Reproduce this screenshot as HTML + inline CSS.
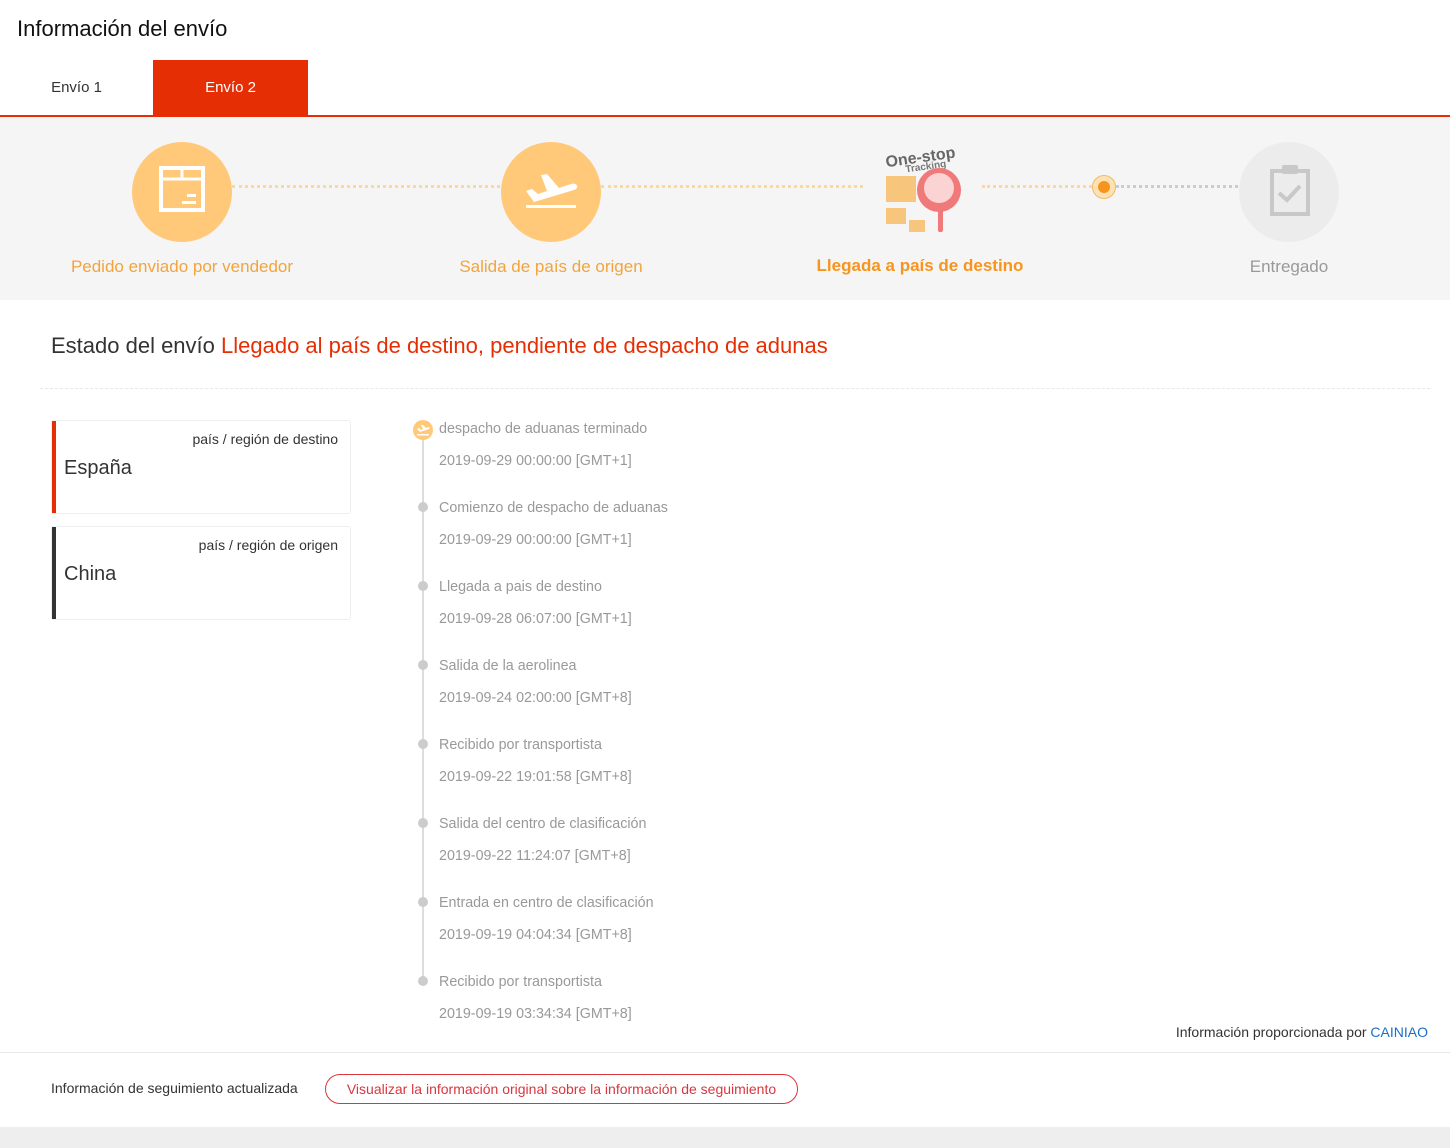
<!DOCTYPE html>
<html><head><meta charset="utf-8"><style>
*{margin:0;padding:0;box-sizing:border-box}
body{width:1450px;height:1148px;background:#fff;font-family:"Liberation Sans",sans-serif;position:relative;overflow:hidden;color:#333}
.a{position:absolute;white-space:nowrap}
.circ{position:absolute;width:100px;height:100px;border-radius:50%;background:#ffc979}
.dots{position:absolute;height:0;border-top:3px dotted #ffd79a}
.lbl{position:absolute;font-size:17px;color:#f3a43c;text-align:center;width:300px}
.card{position:absolute;left:51px;width:300px;height:94px;border:1px solid #eee;border-radius:3px;background:#fff}
.card .s{position:absolute;left:0;top:0;bottom:0;width:4px}
.card .t{position:absolute;right:12px;top:10px;font-size:14px;color:#333}
.card .n{position:absolute;left:12px;top:36px;font-size:20px;color:#333}
.ev{position:absolute;left:439px;font-size:14.3px;color:#999}
.dot{position:absolute;left:418px;width:10px;height:10px;border-radius:50%;background:#ccc}
</style></head><body>
<div class="a" style="left:17px;top:16px;font-size:22px;color:#111">Información del envío</div>
<div class="a" style="left:0;top:60px;width:153px;height:55px;line-height:55px;text-align:center;font-size:15px;color:#333">Envío 1</div>
<div class="a" style="left:153px;top:60px;width:155px;height:55px;line-height:55px;text-align:center;font-size:15px;color:#fff;background:#e62e04">Envío 2</div>
<div class="a" style="left:0;top:115px;width:1450px;height:2px;background:#e62e04"></div>
<div class="a" style="left:0;top:117px;width:1450px;height:183px;background:#f5f5f5"></div>

<div class="dots" style="left:232px;top:185px;width:268px"></div>
<div class="dots" style="left:601px;top:185px;width:262px"></div>
<div class="dots" style="left:982px;top:185px;width:110px"></div>
<div class="dots" style="left:1116px;top:185px;width:122px;border-top-color:#ccc"></div>

<div class="circ" style="left:132px;top:142px">
<svg width="100" height="100" viewBox="0 0 100 100"><rect x="29" y="26" width="42" height="42" fill="none" stroke="#fff" stroke-width="4"/><line x1="29" y1="37" x2="71" y2="37" stroke="#fff" stroke-width="3"/><line x1="50" y1="26" x2="50" y2="37" stroke="#fff" stroke-width="3"/><rect x="55" y="52" width="9" height="3" fill="#fff"/><rect x="50" y="59" width="14" height="3" fill="#fff"/></svg></div>
<div class="circ" style="left:501px;top:142px">
<svg width="100" height="100" viewBox="0 0 100 100"><path d="M25 49 L31 47 L37 52 L46 49 L40 33 L46 32 L58 46 L70 42 C76 40 79 46 73 48 L33 60 Z" fill="#fff"/><rect x="25" y="63" width="50" height="3" fill="#fff"/></svg></div>

<div class="a" style="left:883px;top:140px;width:85px;height:95px">
<svg width="85" height="95" viewBox="0 0 85 95"><text x="2" y="22" font-size="16" font-weight="bold" fill="#666" font-family="Liberation Sans" transform="rotate(-8 40 15)">One-stop</text><text x="22" y="30" font-size="10" font-weight="bold" fill="#777" font-family="Liberation Sans" transform="rotate(-8 40 25)">Tracking</text><rect x="3" y="36" width="30" height="26" fill="#f8c57c"/><rect x="3" y="68" width="20" height="16" fill="#f8c57c"/><rect x="26" y="80" width="16" height="12" fill="#f8c57c"/><circle cx="56" cy="50" r="22" fill="#f07a7a"/><circle cx="56" cy="48" r="15" fill="#fbd3d3"/><rect x="55" y="70" width="5" height="22" rx="2" fill="#f07a7a"/></svg></div>

<div class="a" style="left:1092px;top:175px;width:24px;height:24px;border-radius:50%;background:#fde2b6;border:1px solid #f5b865"></div>
<div class="a" style="left:1098px;top:181px;width:12px;height:12px;border-radius:50%;background:#f7941d"></div>

<div class="circ" style="left:1239px;top:142px;background:#ececec">
<svg width="100" height="100" viewBox="0 0 100 100"><rect x="33" y="29" width="36" height="43" fill="none" stroke="#c8c8c8" stroke-width="4"/><rect x="43" y="23" width="16" height="9" rx="2" fill="#c8c8c8"/><path d="M40 51 L48 58 L61 44" fill="none" stroke="#c8c8c8" stroke-width="4"/></svg></div>

<div class="lbl" style="left:32px;top:257px">Pedido enviado por vendedor</div>
<div class="lbl" style="left:401px;top:257px">Salida de país de origen</div>
<div class="lbl" style="left:770px;top:256px;font-weight:bold;color:#f7941d">Llegada a país de destino</div>
<div class="lbl" style="left:1139px;top:257px;color:#999">Entregado</div>

<div class="a" style="left:51px;top:333px;font-size:22px;color:#333">Estado del envío <span style="color:#e62e04">Llegado al país de destino, pendiente de despacho de adunas</span></div>
<div class="a" style="left:40px;top:388px;width:1390px;border-top:1px dashed #e8e8e8"></div>

<div class="card" style="top:420px"><div class="s" style="background:#e62e04"></div><div class="t">país / región de destino</div><div class="n">España</div></div>
<div class="card" style="top:526px"><div class="s" style="background:#333"></div><div class="t">país / región de origen</div><div class="n">China</div></div>

<div class="a" style="left:422px;top:432px;width:2px;height:550px;background:#ddd"></div>
<div class="a" style="left:413px;top:420px;width:20px;height:20px;border-radius:50%;background:#ffc979"><svg width="20" height="20" viewBox="0 0 20 20"><path d="M4 9 L6 8 L8 10 L10 9 L8 5 L10 5 L13 8 L15 7 C17 7 17 9 16 9 L7 12 Z" fill="#fff"/><rect x="4" y="14" width="12" height="1.5" fill="#fff"/></svg></div>

<div class="ev" style="top:421px">despacho de aduanas terminado</div><div class="ev" style="top:453px">2019-09-29 00:00:00 [GMT+1]</div>
<div class="dot" style="top:502px"></div><div class="ev" style="top:500px">Comienzo de despacho de aduanas</div><div class="ev" style="top:532px">2019-09-29 00:00:00 [GMT+1]</div>
<div class="dot" style="top:581px"></div><div class="ev" style="top:579px">Llegada a pais de destino</div><div class="ev" style="top:611px">2019-09-28 06:07:00 [GMT+1]</div>
<div class="dot" style="top:660px"></div><div class="ev" style="top:658px">Salida de la aerolinea</div><div class="ev" style="top:690px">2019-09-24 02:00:00 [GMT+8]</div>
<div class="dot" style="top:739px"></div><div class="ev" style="top:737px">Recibido por transportista</div><div class="ev" style="top:769px">2019-09-22 19:01:58 [GMT+8]</div>
<div class="dot" style="top:818px"></div><div class="ev" style="top:816px">Salida del centro de clasificación</div><div class="ev" style="top:848px">2019-09-22 11:24:07 [GMT+8]</div>
<div class="dot" style="top:897px"></div><div class="ev" style="top:895px">Entrada en centro de clasificación</div><div class="ev" style="top:927px">2019-09-19 04:04:34 [GMT+8]</div>
<div class="dot" style="top:976px"></div><div class="ev" style="top:974px">Recibido por transportista</div><div class="ev" style="top:1006px">2019-09-19 03:34:34 [GMT+8]</div>

<div class="a" style="right:22px;top:1024px;font-size:14px;color:#333">Información proporcionada por <span style="color:#1a6fc9">CAINIAO</span></div>
<div class="a" style="left:0;top:1052px;width:1450px;border-top:1px solid #e8e8e8"></div>
<div class="a" style="left:51px;top:1080px;font-size:14px;color:#333">Información de seguimiento actualizada</div>
<div class="a" style="left:325px;top:1074px;width:473px;height:30px;border:1px solid #d9363e;border-radius:15px;color:#d9363e;font-size:14px;line-height:28px;text-align:center">Visualizar la información original sobre la información de seguimiento</div>
<div class="a" style="left:0;top:1127px;width:1450px;height:21px;background:#eee"></div>
</body></html>
